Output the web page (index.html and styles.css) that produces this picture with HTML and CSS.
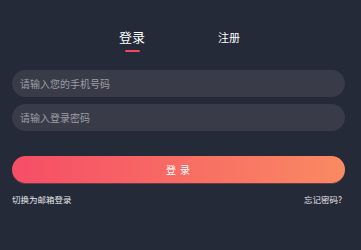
FILE: index.html
```html
<!DOCTYPE html>
<html lang="zh">
<head>
<meta charset="utf-8">
<link rel="stylesheet" href="styles.css">
</head>
<body>
<div class="page">
  <div class="tabs">
    <div class="tab active">登录<span class="bar"></span></div>
    <div class="tab">注册</div>
  </div>
  <div class="form">
    <div class="field">请输入您的手机号码</div>
    <div class="field">请输入登录密码</div>
    <div class="btn">登 录</div>
    <div class="links">
      <span>切换为邮箱登录</span>
      <span>忘记密码?</span>
    </div>
  </div>
</div>
</body>
</html>
```
FILE: styles.css
```css
html, body {
  margin: 0;
  padding: 0;
  background: #252a38;
}
body {
  font-family: "Noto Sans CJK SC", "Noto Sans", sans-serif;
  width: 361px;
  height: 250px;
  overflow: hidden;
}
.page {
  padding-top: 27px;
}
.tabs {
  display: flex;
  justify-content: center;
}
.tab {
  width: 97px;
  text-align: center;
  color: #ffffff;
  font-size: 11px;
  line-height: 20px;
  position: relative;
  height: 26px;
}
.tab.active {
  font-size: 13px;
}
.bar {
  position: absolute;
  left: 50%;
  top: 23px;
  width: 15px;
  height: 2px;
  margin-left: -7px;
  background: #f2475f;
  border-radius: 1px;
}
.form {
  padding: 17px 16px 0 12px;
  display: flex;
  flex-direction: column;
}
.field {
  height: 27px;
  border-radius: 14px;
  background: #393c48;
  color: #9b9da6;
  font-size: 10px;
  line-height: 27px;
  padding-left: 8px;
  margin-bottom: 7px;
}
.btn {
  margin-top: 18px;
  height: 27px;
  border-radius: 14px;
  background: linear-gradient(90deg, #f64d66 0%, #f98a62 100%);
  box-shadow: 0 1px 0 #6b3b47;
  color: #ffffff;
  font-size: 10px;
  line-height: 27px;
  text-align: center;
  letter-spacing: 1px;
}
.links {
  display: flex;
  justify-content: space-between;
  margin-top: 10px;
  color: #e6e7ea;
  font-size: 8.5px;
  line-height: 12px;
  padding-right: 3px;
}
```
